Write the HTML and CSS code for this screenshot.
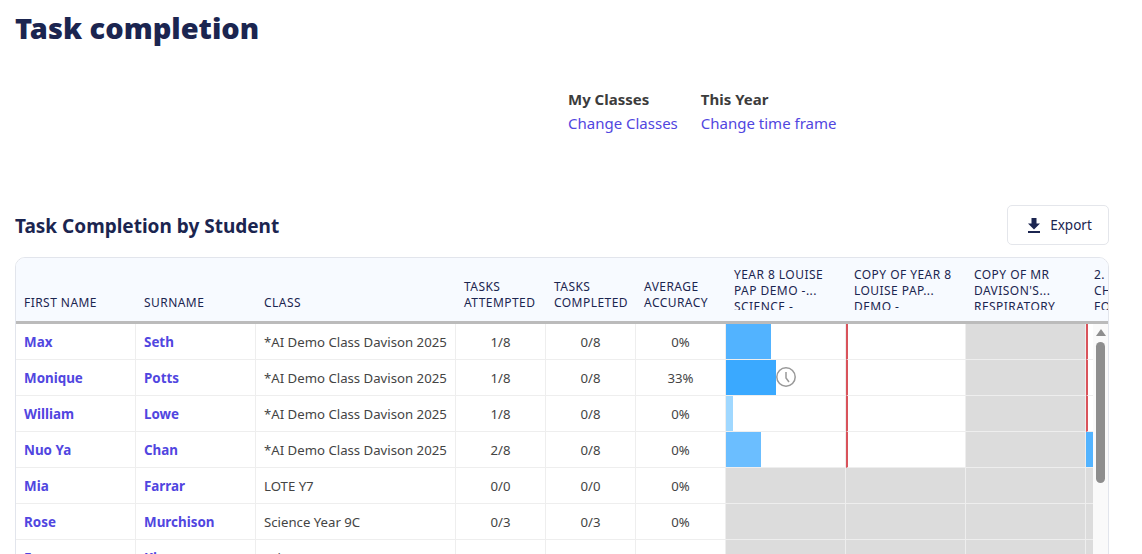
FILE: index.html
```html
<!DOCTYPE html>
<html lang="en">
<head>
    <meta charset="UTF-8">
    <meta name="viewport" content="width=device-width, initial-scale=1.0">
    <title>Task completion</title>
    <link rel="stylesheet" href="styles.css">
</head>
<body>

    <h1 class="page-title">Task completion</h1>

    <div class="filters">
        <div class="filter">
            <strong>My Classes</strong>
            <a href="#">Change Classes</a>
        </div>
        <div class="filter">
            <strong>This Year</strong>
            <a href="#">Change time frame</a>
        </div>
    </div>

    <div class="section-head">
        <h2>Task Completion by Student</h2>
        <button type="button" class="export-btn">
            <svg width="12" height="15" viewBox="0 0 12 15"><path d="M3.5 0h5v5.5H12L6 11.5 0 5.5h3.5z"/><rect x="0" y="13" width="12" height="2"/></svg>
            Export
        </button>
    </div>

    <div class="table-card">
        <div class="table-head">
            <div class="th col-name"><span>First name</span></div>
            <div class="th col-name"><span>Surname</span></div>
            <div class="th col-class"><span>Class</span></div>
            <div class="th col-stat"><span>Tasks attempted</span></div>
            <div class="th col-stat"><span>Tasks completed</span></div>
            <div class="th col-stat"><span>Average accuracy</span></div>
            <div class="th col-task"><span>Year 8 Louise Pap Demo -... Science -</span></div>
            <div class="th col-task"><span>Copy of Year 8 Louise Pap... Demo -</span></div>
            <div class="th col-task"><span>Copy of Mr Davison's... Respiratory</span></div>
            <div class="th col-task"><span>2.<br>Chemical<br>Formulas</span></div>
        </div>
        <div class="table-body">
            <div class="rows">
                <div class="row">
                    <a class="td col-name link" href="#">Max</a>
                    <a class="td col-name link" href="#">Seth</a>
                    <div class="td col-class">*AI Demo Class Davison 2025</div>
                    <div class="td col-stat center">1/8</div>
                    <div class="td col-stat center">0/8</div>
                    <div class="td col-stat center">0%</div>
                    <div class="td col-task"><div class="bar" style="width: 45px; background: #52b3ff"></div></div>
                    <div class="td col-task overdue"></div>
                    <div class="td col-task na"></div>
                    <div class="td col-task overdue"></div>
                </div>
                <div class="row">
                    <a class="td col-name link" href="#">Monique</a>
                    <a class="td col-name link" href="#">Potts</a>
                    <div class="td col-class">*AI Demo Class Davison 2025</div>
                    <div class="td col-stat center">1/8</div>
                    <div class="td col-stat center">0/8</div>
                    <div class="td col-stat center">33%</div>
                    <div class="td col-task">
                        <div class="bar" style="width: 50px; background: #3aa9ff"></div>
                        <svg class="clock" width="20" height="20" viewBox="0 0 20 20"><circle cx="10" cy="10" r="9.2"/><path d="M10 5v6l3 4"/></svg>
                    </div>
                    <div class="td col-task overdue"></div>
                    <div class="td col-task na"></div>
                    <div class="td col-task overdue"></div>
                </div>
                <div class="row">
                    <a class="td col-name link" href="#">William</a>
                    <a class="td col-name link" href="#">Lowe</a>
                    <div class="td col-class">*AI Demo Class Davison 2025</div>
                    <div class="td col-stat center">1/8</div>
                    <div class="td col-stat center">0/8</div>
                    <div class="td col-stat center">0%</div>
                    <div class="td col-task"><div class="bar" style="width: 7px; background: #a0d8ff"></div></div>
                    <div class="td col-task overdue"></div>
                    <div class="td col-task na"></div>
                    <div class="td col-task overdue"></div>
                </div>
                <div class="row">
                    <a class="td col-name link" href="#">Nuo Ya</a>
                    <a class="td col-name link" href="#">Chan</a>
                    <div class="td col-class">*AI Demo Class Davison 2025</div>
                    <div class="td col-stat center">2/8</div>
                    <div class="td col-stat center">0/8</div>
                    <div class="td col-stat center">0%</div>
                    <div class="td col-task"><div class="bar" style="width: 35px; background: #6bbeff"></div></div>
                    <div class="td col-task overdue"></div>
                    <div class="td col-task na"></div>
                    <div class="td col-task"><div class="bar" style="width: 40px; background: #52b3ff"></div></div>
                </div>
                <div class="row">
                    <a class="td col-name link" href="#">Mia</a>
                    <a class="td col-name link" href="#">Farrar</a>
                    <div class="td col-class">LOTE Y7</div>
                    <div class="td col-stat center">0/0</div>
                    <div class="td col-stat center">0/0</div>
                    <div class="td col-stat center">0%</div>
                    <div class="td col-task na"></div>
                    <div class="td col-task na"></div>
                    <div class="td col-task na"></div>
                    <div class="td col-task na"></div>
                </div>
                <div class="row">
                    <a class="td col-name link" href="#">Rose</a>
                    <a class="td col-name link" href="#">Murchison</a>
                    <div class="td col-class">Science Year 9C</div>
                    <div class="td col-stat center">0/3</div>
                    <div class="td col-stat center">0/3</div>
                    <div class="td col-stat center">0%</div>
                    <div class="td col-task na"></div>
                    <div class="td col-task na"></div>
                    <div class="td col-task na"></div>
                    <div class="td col-task na"></div>
                </div>
                <div class="row">
                    <a class="td col-name link" href="#">Fynn</a>
                    <a class="td col-name link" href="#">Kim</a>
                    <div class="td col-class">Science Year 9C</div>
                    <div class="td col-stat center">0/3</div>
                    <div class="td col-stat center">0/3</div>
                    <div class="td col-stat center">0%</div>
                    <div class="td col-task na"></div>
                    <div class="td col-task na"></div>
                    <div class="td col-task na"></div>
                    <div class="td col-task na"></div>
                </div>
            </div>
            <div class="scrollbar">
                <div class="scroll-arrow"></div>
                <div class="scroll-thumb"></div>
            </div>
        </div>
    </div>

</body>
</html>
```

FILE: styles.css
```css
html, body {
    height: 100%;
    overflow: hidden;
}
body {
    margin: 0;
    padding: 0 15px;
    font-family: "Noto Sans", Arial, sans-serif;
    font-size: 13.2px;
    color: #444;
    background: #fff;
}
.page-title {
    margin: 0;
    padding-top: 8px;
    font-size: 29px;
    line-height: 40px;
    font-weight: 900;
    color: #1b2550;
}
.filters {
    display: flex;
    gap: 23px;
    margin-top: 41px;
    padding-left: 553px;
}
.filter {
    display: flex;
    flex-direction: column;
    gap: 4px;
    font-size: 15px;
    line-height: 20px;
}
.filter strong {
    color: #3c3c3c;
    font-weight: 700;
}
.filter a {
    color: #5146e0;
    text-decoration: none;
}
.section-head {
    display: flex;
    justify-content: space-between;
    align-items: center;
    margin-top: 72px;
    width: 1094px;
}
.section-head h2 {
    margin: 0;
    padding-top: 2px;
    font-size: 19px;
    line-height: 26px;
    font-weight: 700;
    color: #1b2550;
}
.export-btn {
    display: flex;
    align-items: center;
    justify-content: center;
    gap: 10px;
    width: 102px;
    height: 40px;
    padding: 0 0 0 4px;
    font-family: inherit;
    font-size: 13.5px;
    color: #1b2550;
    background: #fff;
    border: 1px solid #e4e6eb;
    border-radius: 5px;
}
.export-btn svg {
    fill: #1b2550;
}
.table-card {
    width: 1094px;
    height: 340px;
    margin-top: 12px;
    border: 1px solid #e2e5ec;
    border-radius: 10px;
    box-sizing: border-box;
    overflow: hidden;
}
.table-head {
    display: flex;
    height: 63px;
    background: #f7faff;
    border-bottom: 3px solid #bbb;
}
.th {
    flex: none;
    box-sizing: border-box;
    height: 53px;
    padding: 0 8px;
    display: flex;
    align-items: flex-end;
    overflow: hidden;
}
.th span {
    font-size: 12px;
    line-height: 16px;
    letter-spacing: 0.45px;
    text-transform: uppercase;
    color: #1b2550;
}
.th.col-task {
    height: 52px;
    align-items: flex-start;
    padding-top: 9px;
}
.col-name { width: 120px; }
.col-class { width: 200px; }
.col-stat { width: 90px; }
.col-task { width: 120px; }
.table-body {
    display: flex;
}
.rows {
    width: 1077px;
    flex: none;
    overflow: hidden;
}
.row {
    display: flex;
    height: 36px;
}
.td {
    flex: none;
    display: flex;
    align-items: center;
    box-sizing: border-box;
    padding: 0 8px;
    height: 36px;
    line-height: 20px;
    white-space: nowrap;
    border-right: 1px solid #eee;
    border-bottom: 1px solid #eee;
}
.link {
    font-size: 13.4px;
    font-weight: 700;
    color: #5146e0;
    text-decoration: none;
}
.center {
    justify-content: center;
}
.td.col-task {
    padding: 0;
    background: #fff;
}
.td.na {
    background: #dcdcdc;
}
.td.overdue {
    border-left: 2px solid #d9535b;
}
.bar {
    height: 100%;
}
.clock {
    margin-top: -2px;
    fill: none;
    stroke: #999;
    stroke-width: 1.5;
}
.scrollbar {
    flex: 1;
    background: #fafafa;
    padding-top: 5px;
}
.scroll-arrow {
    width: 0;
    height: 0;
    margin: 0 auto;
    border-left: 5px solid transparent;
    border-right: 5px solid transparent;
    border-bottom: 7px solid #8e8e8e;
}
.scroll-thumb {
    width: 9px;
    height: 141px;
    margin: 6px auto 0;
    background: #8e8e8e;
    border-radius: 5px;
}
```
